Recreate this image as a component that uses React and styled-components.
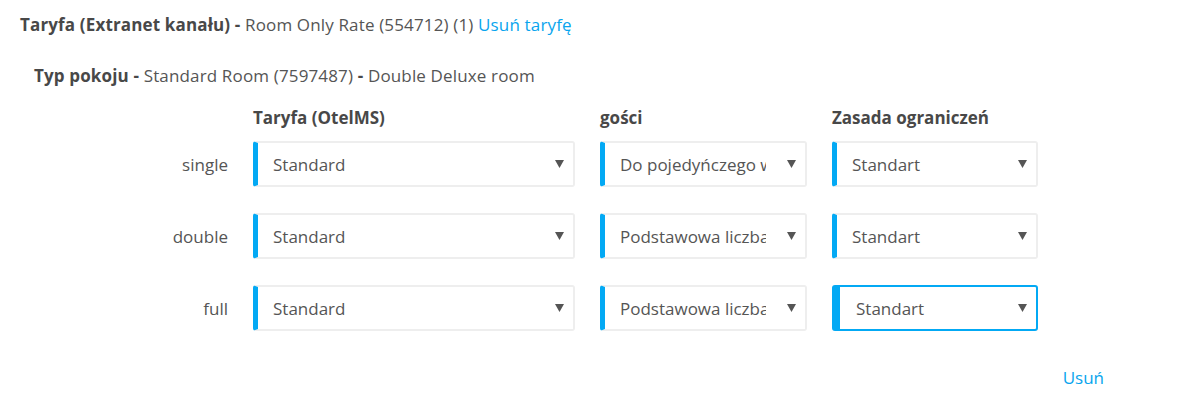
import React from "react";
import styled, { createGlobalStyle, css } from "styled-components";

const Global = createGlobalStyle`
  html, body { margin: 0; padding: 0; background: #fff; }
  body { font-family: "Open Sans", "Noto Sans", sans-serif; color: #555; font-size: 17px; }
`;

const Page = styled.div`
  width: 1191px;
  height: 400px;
  box-sizing: border-box;
  padding: 13px 0 0 20px;
  overflow: hidden;
`;

const Title = styled.div`
  font-size: 17px;
  line-height: 23px;
  color: #555;
  white-space: nowrap;
  letter-spacing: 0.15px;
`;

const Strong = styled.b`
  font-weight: 700;
  color: #484848;
`;

const Link = styled.a`
  color: #08a5ee;
  text-decoration: none;
  cursor: pointer;
`;

const Sub = styled(Title)`
  margin: 28px 0 0 14px;
`;

const Grid = styled.div`
  display: grid;
  grid-template-columns: 194px 322px 207px 206px;
  column-gap: 25px;
  row-gap: 26px;
  margin: 19px 0 0 14px;
  align-items: center;
`;

const Head = styled.div`
  font-weight: 700;
  font-size: 17px;
  color: #484848;
  line-height: 23px;
  margin-bottom: -14px;
  white-space: nowrap;
`;

const Label = styled.div`
  text-align: right;
  font-size: 17px;
  color: #555;
`;

const Select = styled.div`
  box-sizing: border-box;
  height: 46px;
  display: flex;
  align-items: center;
  gap: 21px;
  border: 2px solid #eeeeee;
  border-left: 5px solid #03a9f4;
  border-radius: 3px;
  padding: 0 9px 0 15px;
  background: #fff;
  font-size: 17px;
  color: #555;
  ${(p) =>
    p.$focused &&
    css`
      border-color: #03a9f4;
      border-left-width: 8px;
      padding-left: 16px;
    `}
`;

const Value = styled.span`
  flex: 1;
  min-width: 0;
  overflow: hidden;
  white-space: nowrap;
`;

const Arrow = () => (
  <svg width="9" height="8" viewBox="0 0 9 8" style={{ flex: "none" }}>
    <path d="M0 0 H9 L4.5 8 Z" fill="#555" />
  </svg>
);

const Footer = styled.div`
  display: flex;
  justify-content: flex-end;
  padding-right: 87px;
  margin-top: 35px;
  font-size: 17px;
`;

const rows = [
  { label: "single", guest: "Do pojedyńczego wykorzystania" },
  { label: "double", guest: "Podstawowa liczba gości" },
  { label: "full", guest: "Podstawowa liczba gości", focus: true },
];

const Sel = ({ value, focused }) => (
  <Select $focused={focused}>
    <Value>{value}</Value>
    <Arrow />
  </Select>
);

export default function App() {
  return (
    <Page>
      <Global />
      <Title>
        <Strong>Taryfa (Extranet kanału) -</Strong> Room Only Rate (554712) (1){" "}
        <Link>Usuń taryfę</Link>
      </Title>
      <Sub>
        <Strong>Typ pokoju -</Strong> Standard Room (7597487) <Strong>-</Strong> Double Deluxe room
      </Sub>
      <Grid>
        <div />
        <Head>Taryfa (OtelMS)</Head>
        <Head>gości</Head>
        <Head>Zasada ograniczeń</Head>
        {rows.map((r) => (
          <React.Fragment key={r.label}>
            <Label>{r.label}</Label>
            <Sel value="Standard" />
            <Sel value={r.guest} />
            <Sel value="Standart" focused={r.focus} />
          </React.Fragment>
        ))}
      </Grid>
      <Footer>
        <Link>Usuń</Link>
      </Footer>
    </Page>
  );
}
